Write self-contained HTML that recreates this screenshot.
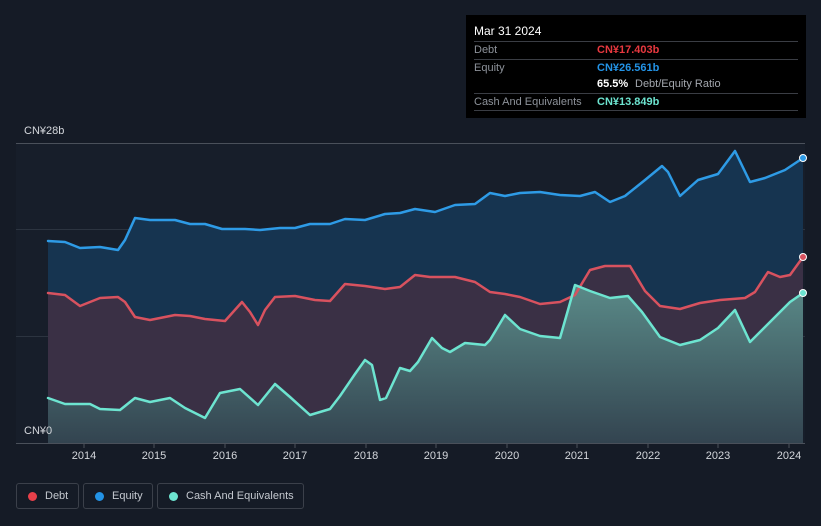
<!DOCTYPE html>
<html><head><meta charset="utf-8"><style>
body{margin:0;background:#151b26;font-family:"Liberation Sans",sans-serif;}
.wrap{position:relative;width:821px;height:526px;overflow:hidden;background:#151b26;}
.tt{position:absolute;left:466px;top:15px;width:340px;height:103px;background:#000;color:#fff;font-size:11px;}
.tt .h{position:absolute;left:8px;top:9px;font-size:12px;}
.row{position:absolute;left:8px;width:324px;border-top:1px solid #3a3d44;height:17px;line-height:17px;white-space:nowrap}
.row .l{position:absolute;left:0;color:#8d929a}
.row .v{position:absolute;left:123px;font-weight:bold}
.leg{position:absolute;top:483px;height:26px;border:1px solid #3b404a;border-radius:3px;color:#c4c8cf;font-size:11px;line-height:26px;box-sizing:border-box;white-space:nowrap}
.leg i{position:absolute;left:11px;top:8px;width:9px;height:9px;border-radius:50%}
.leg span{position:absolute;left:28px;top:-1px}
.yl{position:absolute;left:24px;color:#d4d7dc;font-size:11px}
.xl{position:absolute;top:450px;color:#d4d7dc;font-size:11px;width:40px;text-align:center}
</style></head><body><div class="wrap">
<svg width="821" height="526" style="position:absolute;left:0;top:0">
<rect x="16" y="143" width="789" height="300" fill="#171e2a"/>
<line x1="16" y1="143.5" x2="805" y2="143.5" stroke="#4a505a"/>
<line x1="16" y1="229.5" x2="805" y2="229.5" stroke="#2c3440"/>
<line x1="16" y1="336.5" x2="805" y2="336.5" stroke="#2c3440"/>
<line x1="16" y1="443.5" x2="805" y2="443.5" stroke="#4a505a"/>
<g stroke="#4a505a"><line x1="84" y1="443" x2="84" y2="448"/><line x1="154" y1="443" x2="154" y2="448"/><line x1="225" y1="443" x2="225" y2="448"/><line x1="295" y1="443" x2="295" y2="448"/><line x1="366" y1="443" x2="366" y2="448"/><line x1="436" y1="443" x2="436" y2="448"/><line x1="507" y1="443" x2="507" y2="448"/><line x1="577" y1="443" x2="577" y2="448"/><line x1="648" y1="443" x2="648" y2="448"/><line x1="718" y1="443" x2="718" y2="448"/><line x1="789" y1="443" x2="789" y2="448"/></g>
<defs><linearGradient id="cg" x1="0" y1="0" x2="0" y2="1"><stop offset="0" stop-color="#5a8a88"/><stop offset="1" stop-color="#334450"/></linearGradient></defs>
<polygon fill="#163450" points="48,443 48,241 65,242 80,248 100,247 118,250 125,240 135,218 150,220 175,220 190,224 205,224 222,229 245,229 260,230 280,228 295,228 310,224 330,224 345,219 365,220 385,214 400,213 415,209 435,212 455,205 475,204 490,193 505,196 520,193 540,192 560,195 580,196 595,192 610,202 625,196 645,180 662,166 668,172 680,196 698,180 718,174 735,151 750,182 765,178 785,170 803,158 803,443"/>
<polygon fill="#3a3045" points="48,443 48,293 65,295 80,306 100,298 118,297 125,302 135,317 150,320 175,315 190,316 205,319 225,321 242,302 250,312 258,325 265,310 275,297 295,296 315,300 330,301 345,284 365,286 385,289 400,287 415,275 430,277 455,277 475,282 490,292 505,294 520,297 540,304 560,302 575,295 590,270 605,266 630,266 645,291 660,306 680,309 700,303 720,300 745,298 755,292 768,272 780,277 790,275 803,257 803,443"/>
<polygon fill="url(#cg)" points="48,443 48,398 65,404 90,404 100,409 120,410 135,398 150,402 170,398 185,408 205,418 220,393 240,389 258,405 275,384 290,397 310,415 330,409 340,396 355,374 365,360 372,365 380,400 386,398 400,368 410,371 418,362 432,338 442,348 450,352 465,343 485,345 490,340 505,315 520,329 540,336 560,338 568,310 575,285 590,291 610,298 628,296 642,312 660,337 680,345 700,340 718,328 735,310 750,342 770,322 790,302 803,293 803,443"/>
<g fill="none" stroke-width="2.5" stroke-linejoin="round" stroke-linecap="round">
<polyline stroke="#2e9be6" points="48,241 65,242 80,248 100,247 118,250 125,240 135,218 150,220 175,220 190,224 205,224 222,229 245,229 260,230 280,228 295,228 310,224 330,224 345,219 365,220 385,214 400,213 415,209 435,212 455,205 475,204 490,193 505,196 520,193 540,192 560,195 580,196 595,192 610,202 625,196 645,180 662,166 668,172 680,196 698,180 718,174 735,151 750,182 765,178 785,170 803,158"/>
<polyline stroke="#d8525f" points="48,293 65,295 80,306 100,298 118,297 125,302 135,317 150,320 175,315 190,316 205,319 225,321 242,302 250,312 258,325 265,310 275,297 295,296 315,300 330,301 345,284 365,286 385,289 400,287 415,275 430,277 455,277 475,282 490,292 505,294 520,297 540,304 560,302 575,295 590,270 605,266 630,266 645,291 660,306 680,309 700,303 720,300 745,298 755,292 768,272 780,277 790,275 803,257"/>
<polyline stroke="#6de4d0" points="48,398 65,404 90,404 100,409 120,410 135,398 150,402 170,398 185,408 205,418 220,393 240,389 258,405 275,384 290,397 310,415 330,409 340,396 355,374 365,360 372,365 380,400 386,398 400,368 410,371 418,362 432,338 442,348 450,352 465,343 485,345 490,340 505,315 520,329 540,336 560,338 568,310 575,285 590,291 610,298 628,296 642,312 660,337 680,345 700,340 718,328 735,310 750,342 770,322 790,302 803,293"/>
</g>
<circle cx="803" cy="158" r="3.5" fill="#2e9be6" stroke="#fff" stroke-width="1"/>
<circle cx="803" cy="257" r="3.5" fill="#d8525f" stroke="#fff" stroke-width="1"/>
<circle cx="803" cy="293" r="3.5" fill="#6de4d0" stroke="#fff" stroke-width="1"/>
</svg>
<div class="yl" style="top:125px">CN¥28b</div>
<div class="yl" style="top:425px">CN¥0</div>
<div class="xl" style="left:64px">2014</div><div class="xl" style="left:134px">2015</div><div class="xl" style="left:205px">2016</div><div class="xl" style="left:275px">2017</div><div class="xl" style="left:346px">2018</div><div class="xl" style="left:416px">2019</div><div class="xl" style="left:487px">2020</div><div class="xl" style="left:557px">2021</div><div class="xl" style="left:628px">2022</div><div class="xl" style="left:698px">2023</div><div class="xl" style="left:769px">2024</div>
<div class="tt">
<div class="h">Mar 31 2024</div>
<div class="row" style="top:26px"><span class="l">Debt</span><span class="v" style="color:#e8383f">CN¥17.403b</span></div>
<div class="row" style="top:44px"><span class="l">Equity</span><span class="v" style="color:#2393e6">CN¥26.561b</span></div>
<div class="row" style="top:61px;border-top:none"><span class="v" style="color:#fff">65.5%</span><span style="position:absolute;left:161px;color:#a3a7ae">Debt/Equity Ratio</span></div>
<div class="row" style="top:78px"><span class="l">Cash And Equivalents</span><span class="v" style="color:#6de4d0">CN¥13.849b</span></div>
<div class="row" style="top:95px;height:0"></div>
</div>
<div class="leg" style="left:16px;width:63px"><i style="background:#e8404a"></i><span>Debt</span></div>
<div class="leg" style="left:83px;width:70px"><i style="background:#2393e6"></i><span>Equity</span></div>
<div class="leg" style="left:157px;width:147px"><i style="background:#6de4d0"></i><span>Cash And Equivalents</span></div>
</div></body></html>
